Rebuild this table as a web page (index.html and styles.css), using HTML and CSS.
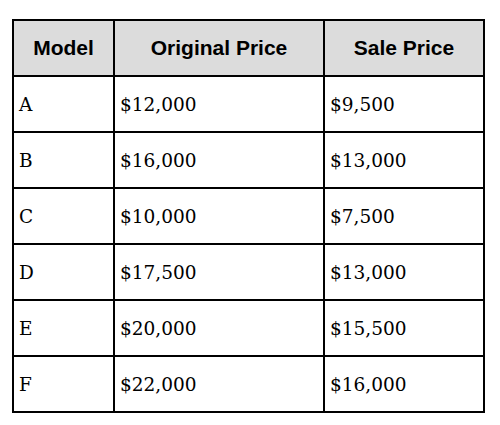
FILE: index.html
```html
<!DOCTYPE html>
<html>
<head>
<meta charset="utf-8">
<link rel="stylesheet" href="styles.css">
</head>
<body>
<div class="page">
  <table class="price-table">
    <colgroup>
      <col class="c-model">
      <col class="c-orig">
      <col class="c-sale">
    </colgroup>
    <thead>
      <tr><th>Model</th><th>Original Price</th><th>Sale Price</th></tr>
    </thead>
    <tbody>
      <tr><td>A</td><td>$12,000</td><td>$9,500</td></tr>
      <tr><td>B</td><td>$16,000</td><td>$13,000</td></tr>
      <tr><td>C</td><td>$10,000</td><td>$7,500</td></tr>
      <tr><td>D</td><td>$17,500</td><td>$13,000</td></tr>
      <tr><td>E</td><td>$20,000</td><td>$15,500</td></tr>
      <tr><td>F</td><td>$22,000</td><td>$16,000</td></tr>
    </tbody>
  </table>
</div>
</body>
</html>
```
FILE: styles.css
```css
* { box-sizing: border-box; }
html, body { margin: 0; padding: 0; background: #fff; }
.page { padding: 19px 0 0 12px; }
.price-table {
  border-collapse: separate;
  border-spacing: 0;
  table-layout: fixed;
  width: 473px;
  border-top: 2px solid #000;
  border-left: 2px solid #000;
}
.c-model { width: 101px; }
.c-orig { width: 210px; }
.c-sale { width: 160px; }
.price-table th, .price-table td {
  border-right: 2px solid #000;
  border-bottom: 2px solid #000;
  height: 56px;
  padding: 0 5px;
  vertical-align: middle;
  color: #000;
}
.price-table th {
  background: #dcdcdc;
  font-family: "Liberation Sans", Arial, sans-serif;
  font-weight: bold;
  font-size: 21px;
  text-align: center;
}
.price-table td {
  font-family: "DejaVu Serif", serif;
  font-size: 18.5px;
  text-align: left;
  padding-left: 5px;
}
```
